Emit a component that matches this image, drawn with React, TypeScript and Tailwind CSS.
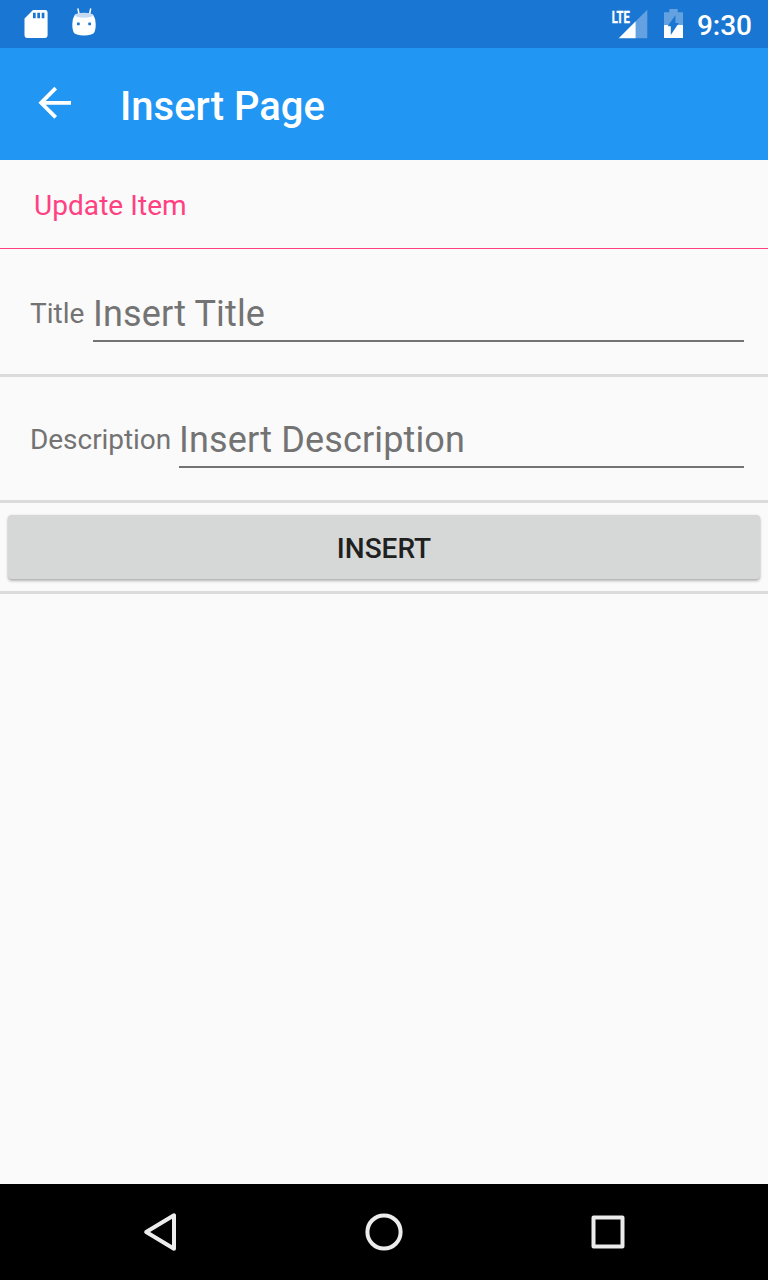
import React from "react";

function StatusBar() {
  return (
    <header className="flex h-12 shrink-0 justify-between bg-[#1976d2] text-white">
      <div className="flex pl-6">
        <svg className="h-12 w-24" viewBox="24 0 96 48" aria-hidden="true">
          <path
            fill="#fff"
            fillRule="evenodd"
            d="M33 10h12.2a2.4 2.4 0 0 1 2.4 2.4v23.2a2.4 2.4 0 0 1-2.4 2.4H26.9a2.4 2.4 0 0 1-2.4-2.4V18.5zM33 12.7v5.6h2.7v-5.6zM37.3 12.7v5.6h2.7v-5.6zM41.7 12.7v5.6h2.7v-5.6z"
          />
          <path d="M78 9l1 5M90.6 9l-1 5" stroke="#fff" strokeWidth="1.5" strokeLinecap="round" />
          <path fill="#fff" d="M75 14.5Q84 11.6 93 14.5Q95.5 18 95.7 24Q95.7 30 94.2 32.6Q92.8 35.4 84 35.4Q75.2 35.4 73.8 32.6Q72.3 30 72.3 24Q72.5 18 75 14.5z" />
          <ellipse cx="84" cy="15.2" rx="9" ry="2.5" fill="#c6dbf3" />
          <rect x="77" y="22.6" width="2.7" height="2.7" rx=".6" fill="#1976d2" />
          <rect x="88.3" y="22.6" width="2.7" height="2.7" rx=".6" fill="#1976d2" />
        </svg>
      </div>
      <div className="flex pr-4">
        <svg className="h-12 w-[88px]" viewBox="609 0 88 48" aria-hidden="true">
          <path fill="#63a1e0" d="M647.3 9.7V38.3H635.7V21.3z" />
          <path fill="#fff" d="M635.7 21.3V38.3H618.7z" />
          <text x="611.8" y="22.8" fill="#fff" stroke="#fff" strokeWidth="0.4" fontFamily="Roboto, sans-serif" fontWeight="700" fontSize="17" textLength="18" lengthAdjust="spacingAndGlyphs">
            LTE
          </text>
          <path fill="#63a1e0" d="M669.3 9h8.4v3.2h5.3V25H664V12.2h5.3z" />
          <path fill="#fff" d="M664 25h19v13h-19z" />
          <path fill="#1976d2" d="M675.4 15.3v7.8h3.4L670.8 35v-8.8h-3.2z" />
        </svg>
        <time className="mt-[10px] text-[28px] leading-8 font-medium">9:30</time>
      </div>
    </header>
  );
}

function AppBar() {
  return (
    <div className="flex h-28 shrink-0 items-center bg-[#2196f3] text-white">
      <button type="button" aria-label="Back" className="ml-[38px] -mt-0.5 h-[34px] w-[34px]">
        <svg viewBox="0 0 34 34" className="h-[34px] w-[34px]" fill="none" stroke="#fff" strokeWidth="3.8">
          <path d="M33 16.8H3M17.7 2.2L3.1 16.8l14.6 14.6" />
        </svg>
      </button>
      <h1 className="mt-1.5 ml-12 text-[40px] leading-[48px] font-medium">Insert Page</h1>
    </div>
  );
}

interface FieldProps {
  label: string;
  placeholder: string;
  className: string;
  labelClassName: string;
}

function Field({ label, placeholder, className, labelClassName }: FieldProps) {
  return (
    <label className={`flex shrink-0 border-b-[3px] border-[#dbdbdb] pr-6 pl-[30px] text-[#737373] ${className}`}>
      <span className={`mt-[11px] shrink-0 text-[28px] leading-8 whitespace-nowrap ${labelClassName}`}>{label}</span>
      <input
        placeholder={placeholder}
        className="ml-2 h-[55px] min-w-0 flex-1 border-b-2 border-[#737373] bg-transparent p-0 text-[36px] leading-[53px] tracking-[0.15px] outline-none placeholder:text-[#737373] placeholder:opacity-100"
      />
    </label>
  );
}

export default function App() {
  return (
    <div className="flex h-[1280px] w-[768px] flex-col overflow-hidden bg-[#fafafa] font-['Roboto',sans-serif]">
      <StatusBar />
      <AppBar />
      <main className="flex flex-1 flex-col">
        <h2 className="h-[89px] shrink-0 border-b border-[#ff4081] pt-[30px] pl-[34px] text-[28px] leading-8 tracking-[0.06px] text-[#ff4081]">
          Update Item
        </h2>
        <Field label="Title" placeholder="Insert Title" className="h-32 pt-[38px]" labelClassName="w-[55px]" />
        <Field
          label="Description"
          placeholder="Insert Description"
          className="h-[126px] pt-9"
          labelClassName="w-[141px] tracking-[-0.05px]"
        />
        <div className="h-[91px] shrink-0 border-b-[3px] border-[#dbdbdb] px-2 pt-3">
          <button
            type="button"
            className="h-[64px] w-full rounded-[4px] bg-[#d6d8d7] pt-1 text-[28px] leading-8 font-medium text-[#1f2020] shadow-[0_2px_3px_rgba(0,0,0,0.28),0_0_2px_rgba(0,0,0,0.1)]"
          >
            INSERT
          </button>
        </div>
      </main>
      <nav className="flex h-24 shrink-0 items-center justify-between bg-black px-[136px]">
        <svg className="size-12" viewBox="0 0 48 48" fill="none" stroke="#ececec" strokeWidth="4" strokeLinejoin="round">
          <path d="M38 7.3v33.4L10.2 24z" />
        </svg>
        <svg className="size-12" viewBox="0 0 48 48" fill="none" stroke="#ececec" strokeWidth="4">
          <circle cx="24" cy="24" r="16.6" />
        </svg>
        <svg className="size-12" viewBox="0 0 48 48" fill="none" stroke="#ececec" strokeWidth="4" strokeLinejoin="round">
          <path d="M9.5 9.5h29v29h-29z" />
        </svg>
      </nav>
    </div>
  );
}
